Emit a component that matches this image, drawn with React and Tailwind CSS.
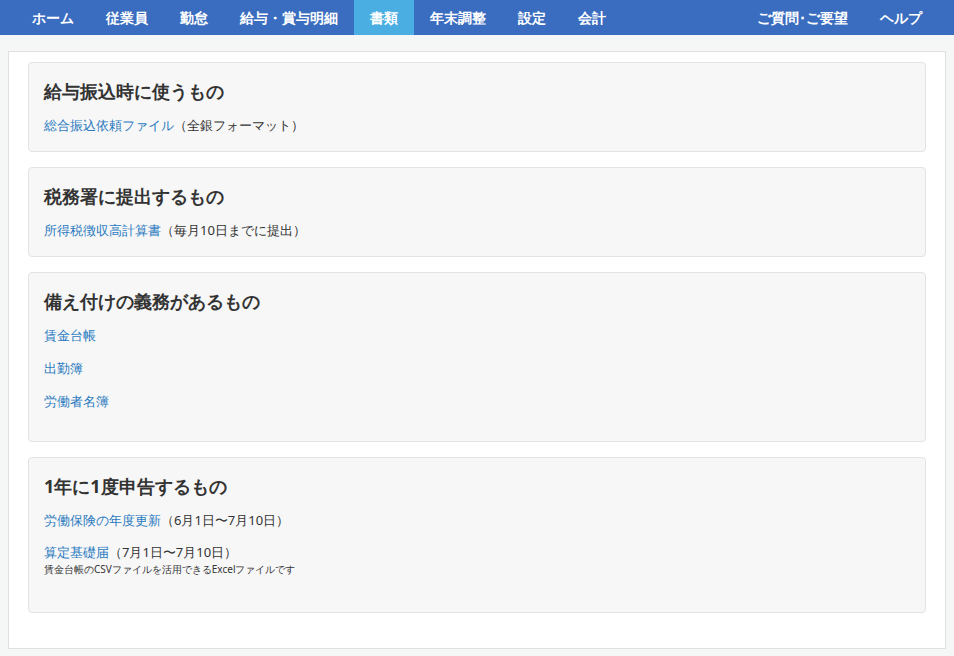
import React from "react";

const navLeft = ["ホーム", "従業員", "勤怠", "給与・賞与明細", "書類", "年末調整", "設定", "会計"];
const navRight = ["ご質問･ご要望", "ヘルプ"];

const Card = ({ title, children, className = "" }) => (
  <div className={`rounded border border-[#e3e3e3] bg-[#f7f7f7] px-[15px] pt-[15px] ${className}`}>
    <h2 className="text-[18px] font-bold leading-[26px] text-[#333]">{title}</h2>
    <div className="mt-[11px] text-[13px] leading-[20px] text-[#333]">{children}</div>
  </div>
);

const A = ({ children }) => <a className="text-[#2a7ac0]">{children}</a>;

export default function App() {
  return (
    <div className="min-h-[656px] bg-[#f5f6f6] font-['Noto_Sans_CJK_JP','Liberation_Sans',sans-serif]">
      <nav className="flex h-[35px] items-stretch justify-between bg-[#3a6dbf] px-4 text-[14px] font-bold text-white">
        <ul className="flex">
          {navLeft.map((n) => (
            <li key={n} className={`flex items-center px-4 ${n === "書類" ? "bg-[#4aaee2]" : ""}`}>{n}</li>
          ))}
        </ul>
        <ul className="flex">
          {navRight.map((n) => (
            <li key={n} className="flex items-center px-4">{n}</li>
          ))}
        </ul>
      </nav>
      <div className="px-2 pt-4">
        <div className="flex h-[598px] flex-col gap-[15px] border border-[#e0e0e0] bg-white px-[19px] pt-[10px]">
          <Card title="給与振込時に使うもの" className="h-[90px]">
            <A>総合振込依頼ファイル</A>（全銀フォーマット）
          </Card>
          <Card title="税務署に提出するもの" className="h-[90px]">
            <A>所得税徴収高計算書</A>（毎月10日までに提出）
          </Card>
          <Card title="備え付けの義務があるもの" className="h-[170px]">
            <div className="flex flex-col gap-[13px]">
              <div><A>賃金台帳</A></div>
              <div><A>出勤簿</A></div>
              <div><A>労働者名簿</A></div>
            </div>
          </Card>
          <Card title="1年に1度申告するもの" className="h-[156px]">
            <div><A>労働保険の年度更新</A>（6月1日〜7月10日）</div>
            <div className="mt-[12px]"><A>算定基礎届</A>（7月1日〜7月10日）</div>
            <div className="text-[10px] leading-[14px]">賃金台帳のCSVファイルを活用できるExcelファイルです</div>
          </Card>
        </div>
      </div>
    </div>
  );
}
